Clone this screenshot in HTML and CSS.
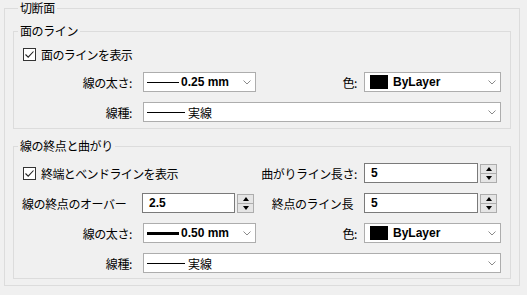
FILE: index.html
```html
<!DOCTYPE html>
<html lang="ja">
<head>
    <meta charset="UTF-8">
    <title>切断面</title>
    <link rel="stylesheet" href="styles.css">
</head>
<body>
    <fieldset class="group outer">
        <legend>切断面</legend>

        <fieldset class="group first">
            <legend>面のライン</legend>
            <div class="form">
                <label class="check wide">
                    <span class="box"><svg width="11" height="11" viewBox="0 0 11 11"><path d="M1.5 5.5 L4.2 8.2 L9.5 2.5" fill="none" stroke="#222" stroke-width="1.1"/></svg></span>
                    面のラインを表示
                </label>

                <span class="label">線の太さ:</span>
                <div class="combo">
                    <span class="sample thin"></span>
                    <b>0.25 mm</b>
                    <svg class="arrow" width="8" height="5" viewBox="0 0 8 5"><path d="M0.5 0.5 L4 4 L7.5 0.5" fill="none" stroke="#8a8a8a"/></svg>
                </div>
                <span class="label right">色:</span>
                <div class="combo">
                    <span class="swatch"></span>
                    <b>ByLayer</b>
                    <svg class="arrow" width="8" height="5" viewBox="0 0 8 5"><path d="M0.5 0.5 L4 4 L7.5 0.5" fill="none" stroke="#8a8a8a"/></svg>
                </div>

                <span class="label">線種:</span>
                <div class="combo span3">
                    <span class="sample type"></span>
                    <span>実線</span>
                    <svg class="arrow" width="8" height="5" viewBox="0 0 8 5"><path d="M0.5 0.5 L4 4 L7.5 0.5" fill="none" stroke="#8a8a8a"/></svg>
                </div>
            </div>
        </fieldset>

        <fieldset class="group second">
            <legend>線の終点と曲がり</legend>
            <div class="form">
                <label class="check half">
                    <span class="box"><svg width="11" height="11" viewBox="0 0 11 11"><path d="M1.5 5.5 L4.2 8.2 L9.5 2.5" fill="none" stroke="#222" stroke-width="1.1"/></svg></span>
                    終端とベンドラインを表示
                </label>
                <span class="label right">曲がりライン長さ:</span>
                <div class="spin-field">
                    <span class="input">5</span>
                    <span class="spin"><i class="up"></i><i class="down"></i></span>
                </div>

                <span class="label left">線の終点のオーバー</span>
                <div class="spin-field">
                    <span class="input">2.5</span>
                    <span class="spin"><i class="up"></i><i class="down"></i></span>
                </div>
                <span class="label right nocolon">終点のライン長</span>
                <div class="spin-field">
                    <span class="input">5</span>
                    <span class="spin"><i class="up"></i><i class="down"></i></span>
                </div>

                <span class="label">線の太さ:</span>
                <div class="combo">
                    <span class="sample thick"></span>
                    <b>0.50 mm</b>
                    <svg class="arrow" width="8" height="5" viewBox="0 0 8 5"><path d="M0.5 0.5 L4 4 L7.5 0.5" fill="none" stroke="#8a8a8a"/></svg>
                </div>
                <span class="label right">色:</span>
                <div class="combo">
                    <span class="swatch"></span>
                    <b>ByLayer</b>
                    <svg class="arrow" width="8" height="5" viewBox="0 0 8 5"><path d="M0.5 0.5 L4 4 L7.5 0.5" fill="none" stroke="#8a8a8a"/></svg>
                </div>

                <span class="label">線種:</span>
                <div class="combo span3">
                    <span class="sample type"></span>
                    <span>実線</span>
                    <svg class="arrow" width="8" height="5" viewBox="0 0 8 5"><path d="M0.5 0.5 L4 4 L7.5 0.5" fill="none" stroke="#8a8a8a"/></svg>
                </div>
            </div>
        </fieldset>
    </fieldset>
</body>
</html>
```

FILE: styles.css
```css
body, html {
    margin: 0;
    padding: 0;
    background: #f0f0f0;
    font-family: "Noto Sans CJK JP", "Noto Sans", sans-serif;
    font-size: 12px;
    color: #000;
}

/* group boxes */
.group {
    margin: 0;
    padding: 0;
    border: 1px solid #dcdcdc;
    min-width: 0;
}

.group legend {
    padding: 0 2px;
    height: 16px;
    line-height: 16px;
    letter-spacing: -0.4px;
}

.outer {
    margin-left: 4px;
    width: 516px;
    box-sizing: border-box;
    padding: 7px 8px 6px 8px;
}

.outer > legend {
    margin-left: 5px;
}

.first > legend,
.second > legend {
    margin-left: 4px;
}

.second {
    margin-top: 9px;
}

.first .form {
    padding: 8px 0 6px 0;
}

.second .form {
    padding: 9px 0 5px 0;
}

.form {
    display: grid;
    grid-template-columns: 129px 113px 108px 137px;
    grid-auto-rows: 20px;
    row-gap: 10px;
    align-items: center;
}

.first .form {
    grid-template-rows: 15px 20px 20px;
}

/* labels */
.label {
    text-align: right;
    padding-right: 11px;
    white-space: nowrap;
    letter-spacing: -0.4px;
}

.label.right {
    padding-right: 7px;
}

.label.nocolon {
    padding-right: 11px;
}

.label.left {
    text-align: left;
    padding-left: 8px;
    padding-right: 0;
}

/* checkbox */
.check {
    display: flex;
    align-items: center;
    padding-left: 9px;
    white-space: nowrap;
    letter-spacing: -0.6px;
}

.check.wide {
    grid-column: 1 / 5;
}

.check.half {
    grid-column: 1 / 3;
}

.box {
    width: 13px;
    height: 13px;
    box-sizing: border-box;
    border: 1px solid #333;
    background: #fff;
    margin-right: 5px;
    display: flex;
    align-items: center;
    justify-content: center;
}

.box svg {
    display: block;
}

/* combo boxes */
.combo {
    display: flex;
    align-items: center;
    height: 20px;
    box-sizing: border-box;
    border: 1px solid #adadad;
    background: #fff;
    padding: 0 4px 0 3px;
    white-space: nowrap;
}

.combo b {
    font-family: "Liberation Sans", Arial, sans-serif;
    font-weight: bold;
    font-size: 12px;
}

.combo .arrow {
    margin-left: auto;
}

.span3 {
    grid-column: 2 / 5;
}

.sample {
    display: block;
    background: #000;
    margin-right: 2px;
}

.sample.thin {
    width: 32px;
    height: 1px;
}

.sample.thick {
    width: 32px;
    height: 3px;
}

.sample.type {
    width: 38px;
    height: 1px;
    margin-right: 3px;
}

.swatch {
    width: 18px;
    height: 14px;
    background: #000;
    margin-left: 2px;
    margin-right: 5px;
}

/* numeric inputs with spinner */
.spin-field {
    display: flex;
    align-items: center;
    gap: 2px;
    width: 133px;
}

.form > .spin-field:nth-child(5) {
    width: 112px;
    margin-left: -1px;
}

.input {
    flex: 1;
    height: 20px;
    box-sizing: border-box;
    border: 1px solid #7a7a7a;
    background: #fff;
    padding-left: 6px;
    line-height: 18px;
    font-family: "Liberation Sans", Arial, sans-serif;
    font-weight: bold;
}

.spin {
    width: 17px;
    height: 19px;
    display: flex;
    flex-direction: column;
}

.spin i {
    flex: 1;
    box-sizing: border-box;
    border: 1px solid #adadad;
    background: #e5e5e5;
    position: relative;
}

.spin i + i {
    border-top: none;
}

.spin i::after {
    content: "";
    position: absolute;
    left: 5px;
    top: 2px;
    border-left: 3px solid transparent;
    border-right: 3px solid transparent;
}

.spin .up::after {
    border-bottom: 4px solid #000;
}

.spin .down::after {
    top: 2px;
    border-top: 4px solid #000;
}
```
